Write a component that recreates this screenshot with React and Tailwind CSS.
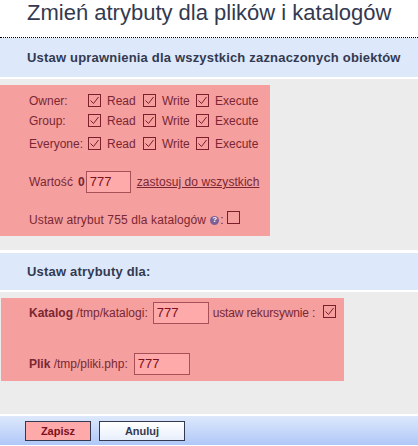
const Check = ({ checked = true }) => (
  <span className="inline-flex w-[13px] h-[13px] border border-[#7a1f2b] items-center justify-center shrink-0">
    {checked && (
      <svg width="11" height="11" viewBox="0 0 11 11" fill="none">
        <path d="M1.5 5.5 L4.5 8.5 L9.5 2" stroke="#7a1f2b" strokeWidth="1" />
      </svg>
    )}
  </span>
);

const PermRow = ({ label, className = "" }) => (
  <div className={`flex items-center h-[19px] ${className}`}>
    <span className="w-[59px]">{label}</span>
    <Check />
    <span className="ml-[6px] w-[36px]">Read</span>
    <Check />
    <span className="ml-[6px] w-[34px]">Write</span>
    <Check />
    <span className="ml-[6px]">Execute</span>
  </div>
);

const Heading = ({ children }) => (
  <div className="bg-[#dde8fb] pl-[27px] font-bold text-[13px] tracking-[0.19px] text-[#333a50] flex items-center">
    {children}
  </div>
);

const ValueBox = ({ className }) => (
  <span className={`h-[22px] border border-[#a85058] bg-[#ffaaaa] text-[#7a1020] text-[13px] pl-[3px] flex items-center ${className}`}>777</span>
);

export default function App() {
  return (
    <div className="w-[418px] h-[446px] bg-white overflow-hidden font-['Liberation_Sans',Arial,sans-serif] text-[12px] text-[#7a2733]">
      <h1 className="h-[37px] pl-[27px] text-[22px] leading-[26px] text-[#333a50] whitespace-nowrap">Zmień atrybuty dla plików i katalogów</h1>
      <div className="border-t border-dotted border-black" />
      <Heading><span className="h-[39px] flex items-center">Ustaw uprawnienia dla wszystkich zaznaczonych obiektów</span></Heading>

      <div className="mt-[2px] bg-[#ececec] h-[171px] pt-[6px]">
        <div className="w-[270px] h-[151px] bg-[#f59f9f] pl-[29px] pt-[6px]">
          <PermRow label="Owner:" />
          <PermRow label="Group:" className="mt-[1px]" />
          <PermRow label="Everyone:" className="mt-[4px]" />
          <div className="flex items-center h-[22px] mt-[18px] tracking-[0.06px]">
            <span>Wartość</span>
            <span className="ml-[5px] font-bold">0</span>
            <ValueBox className="ml-[1px] w-[45px]" />
            <span className="ml-[6px] underline">zastosuj do wszystkich</span>
          </div>
          <div className="flex items-center h-[14px] mt-[20px] tracking-[0.12px]">
            <span>Ustaw atrybut 755 dla katalogów</span>
            <span className="ml-[4px] w-[9px] h-[9px] rounded-full bg-[#7d5f96] text-white text-[8px] font-bold flex items-center justify-center">?</span>
            <span className="ml-[1px]">:</span>
            <span className="ml-[3px]"><Check checked={false} /></span>
          </div>
        </div>
      </div>

      <div className="h-[3px]" />
      <Heading><span className="h-[37px] flex items-center">Ustaw atrybuty dla:</span></Heading>

      <div className="mt-[2px] bg-[#ececec] h-[122px] pt-[6px]">
        <div className="ml-[1px] w-[343px] h-[83px] bg-[#f59f9f] pl-[28px] pt-[4px]">
          <div className="flex items-center h-[22px]">
            <span><b>Katalog</b> /tmp/katalogi:</span>
            <ValueBox className="ml-[5px] w-[56px]" />
            <span className="ml-[4px] tracking-[-0.15px]">ustaw rekursywnie :</span>
            <span className="ml-[8px]"><Check /></span>
          </div>
          <div className="flex items-center h-[22px] mt-[29px]">
            <span><b>Plik</b> /tmp/pliki.php:</span>
            <ValueBox className="ml-[6px] w-[56px]" />
          </div>
        </div>
      </div>

      <div className="mt-[2px] h-[29px] bg-gradient-to-b from-[#dde8fb] to-[#b0c8f8] pl-[25px] pt-[5px] flex items-start gap-[8px]">
        <button className="w-[66px] h-[20px] border border-[#333a50] bg-[#ffaaaa] text-[#7a1020] font-bold text-[11px]">Zapisz</button>
        <button className="w-[86px] h-[20px] border border-[#333a50] bg-gradient-to-b from-white to-[#e8effc] text-[#333a50] font-bold text-[11px]">Anuluj</button>
      </div>
    </div>
  );
}
